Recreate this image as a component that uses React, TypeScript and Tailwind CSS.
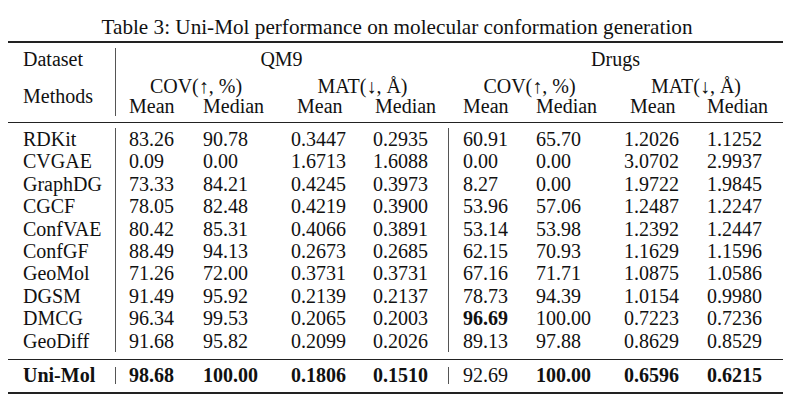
import React from 'react';

// Uni-Mol, tabela 3: geração de conformações
type Row = { name: string; cells: string[]; bold?: number[] };

const rows: Row[] = [
  { name: 'RDKit', cells: ['83.26', '90.78', '0.3447', '0.2935', '60.91', '65.70', '1.2026', '1.1252'] },
  { name: 'CVGAE', cells: ['0.09', '0.00', '1.6713', '1.6088', '0.00', '0.00', '3.0702', '2.9937'] },
  { name: 'GraphDG', cells: ['73.33', '84.21', '0.4245', '0.3973', '8.27', '0.00', '1.9722', '1.9845'] },
  { name: 'CGCF', cells: ['78.05', '82.48', '0.4219', '0.3900', '53.96', '57.06', '1.2487', '1.2247'] },
  { name: 'ConfVAE', cells: ['80.42', '85.31', '0.4066', '0.3891', '53.14', '53.98', '1.2392', '1.2447'] },
  { name: 'ConfGF', cells: ['88.49', '94.13', '0.2673', '0.2685', '62.15', '70.93', '1.1629', '1.1596'] },
  { name: 'GeoMol', cells: ['71.26', '72.00', '0.3731', '0.3731', '67.16', '71.71', '1.0875', '1.0586'] },
  { name: 'DGSM', cells: ['91.49', '95.92', '0.2139', '0.2137', '78.73', '94.39', '1.0154', '0.9980'] },
  { name: 'DMCG', cells: ['96.34', '99.53', '0.2065', '0.2003', '96.69', '100.00', '0.7223', '0.7236'], bold: [4] },
  { name: 'GeoDiff', cells: ['91.68', '95.82', '0.2099', '0.2026', '89.13', '97.88', '0.8629', '0.8529'] },
];

const uniMol: Row = {
  name: 'Uni-Mol',
  cells: ['98.68', '100.00', '0.1806', '0.1510', '92.69', '100.00', '0.6596', '0.6215'],
  bold: [0, 1, 2, 3, 5, 6, 7],
};

const cols = 'grid grid-cols-[108px_87px_88px_82px_76px_87px_88px_83px_76px]';
const vline = 'border-[#555]';

// padding de cada coluna de dados
const cellPad = ['pl-[13px]', '', '', '', 'pl-[14px]', '', '', ''];

const DataRow = ({ row, lh, allBold }: { row: Row; lh: string; allBold?: boolean }) => (
  <div className={`${cols} ${lh}`}>
    <div className={`pl-[15px] border-r ${vline} ${allBold ? 'font-bold' : ''}`}>{row.name}</div>
    {row.cells.map((c, i) => (
      <div
        key={i}
        className={`${cellPad[i]} ${i === 3 ? `border-r ${vline}` : ''} ${row.bold?.includes(i) ? 'font-bold' : ''}`}
      >
        {c}
      </div>
    ))}
  </div>
);

export default function App() {
  return (
    <div className="w-[797px] h-[406px] bg-white text-[#111] font-['Liberation_Serif',serif] overflow-hidden">
      <div className="pt-[17px] text-center text-[21.2px] leading-[21px] pr-[3px] whitespace-nowrap">
        Table 3: Uni-Mol performance on molecular conformation generation
      </div>

      <div className="ml-[8px] w-[775px] text-[20px]">
        {/* regra superior */}
        <div className="mt-[3px] h-[2px] bg-[#222]" />

        {/* cabeçalho */}
        <div className={`${cols} grid-rows-[22px_6px_20px_20px] mt-[5px] leading-[20px]`}>
          <div className={`row-span-4 border-r ${vline} flex flex-col`}>
            <div className="pl-[15px] h-[22px] leading-[22px]">Dataset</div>
            <div className="h-[6px]" />
            <div className="pl-[15px] h-[40px] flex items-center leading-[22.4px]">Methods</div>
          </div>
          <div className="col-span-4 text-center pl-[13px] pr-[15px] leading-[22px]">QM9</div>
          <div className="col-span-4 text-center pl-[14px] pr-[15px] leading-[22px]">Drugs</div>
          <div className="col-span-8" />
          <div className="col-span-2 text-center pl-[13px] pr-[28px] whitespace-nowrap">COV(↑, %)</div>
          <div className="col-span-2 text-center pr-[15px] whitespace-nowrap">MAT(↓, Å)</div>
          <div className="col-span-2 text-center pl-[14px] pr-[28px] whitespace-nowrap">COV(↑, %)</div>
          <div className="col-span-2 text-center pr-[15px] whitespace-nowrap">MAT(↓, Å)</div>
          <div className="pl-[13px]">Mean</div>
          <div>Median</div>
          <div className="pl-[6px]">Mean</div>
          <div className="pl-[2px]">Median</div>
          <div className="pl-[14px]">Mean</div>
          <div>Median</div>
          <div className="pl-[6px]">Mean</div>
          <div>Median</div>
        </div>

        <div className="mt-[6px] h-px bg-[#222]" />

        {/* corpo */}
        <div className="mt-[5px]">
          {rows.map((r) => (
            <DataRow key={r.name} row={r} lh="leading-[22.4px]" />
          ))}
        </div>

        <div className="mt-[7px] h-px bg-[#222]" />

        <div className="mt-[7px]">
          <DataRow row={uniMol} lh="leading-[17px]" allBold />
        </div>

        {/* regra inferior */}
        <div className="mt-[8px] h-[2px] bg-[#222]" />
      </div>
    </div>
  );
}
